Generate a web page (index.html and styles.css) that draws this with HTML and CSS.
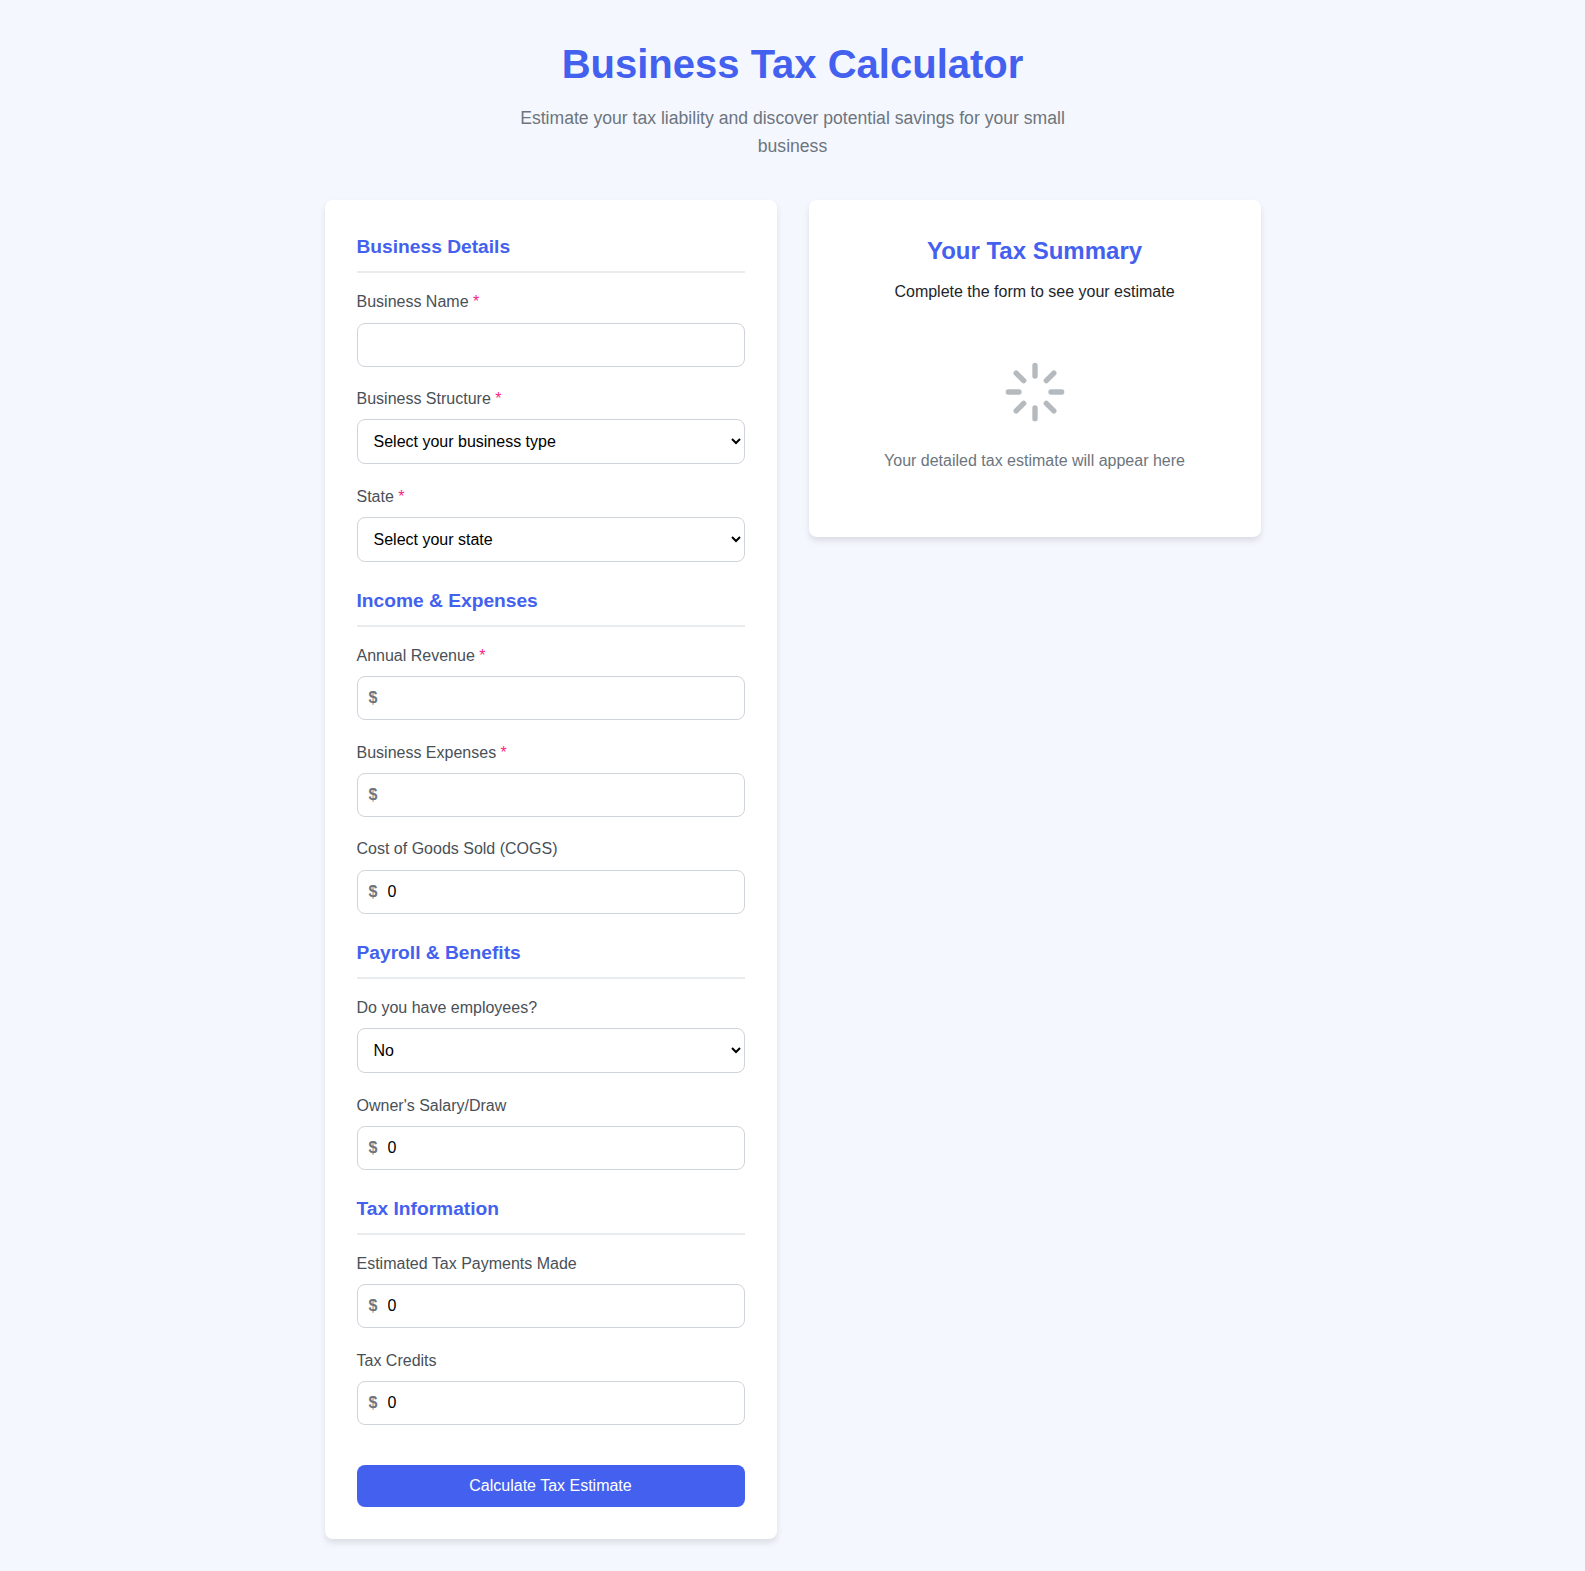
FILE: index.html
```html
<!DOCTYPE html>
<html lang="en">
<head>
<meta charset="utf-8">
<title>Business Tax Calculator</title>
<link rel="stylesheet" href="styles.css">
</head>
<body>
<div class="container">
  <header class="header">
    <h1>Business Tax Calculator</h1>
    <p>Estimate your tax liability and discover potential savings for your small business</p>
  </header>
  <main class="layout">
    <form class="card form-card">
      <h2 class="section-title">Business Details</h2>
      <div class="field">
        <label>Business Name <span class="req">*</span></label>
        <input class="control" type="text">
      </div>
      <div class="field">
        <label>Business Structure <span class="req">*</span></label>
        <select class="control"><option>Select your business type</option></select>
      </div>
      <div class="field">
        <label>State <span class="req">*</span></label>
        <select class="control"><option>Select your state</option></select>
      </div>
      <h2 class="section-title">Income &amp; Expenses</h2>
      <div class="field">
        <label>Annual Revenue <span class="req">*</span></label>
        <div class="money"><span class="sign">$</span><input class="control" type="text"></div>
      </div>
      <div class="field">
        <label>Business Expenses <span class="req">*</span></label>
        <div class="money"><span class="sign">$</span><input class="control" type="text"></div>
      </div>
      <div class="field">
        <label>Cost of Goods Sold (COGS)</label>
        <div class="money"><span class="sign">$</span><input class="control" type="text" value="0"></div>
      </div>
      <h2 class="section-title">Payroll &amp; Benefits</h2>
      <div class="field">
        <label>Do you have employees?</label>
        <select class="control"><option>No</option><option>Yes</option></select>
      </div>
      <div class="field">
        <label>Owner's Salary/Draw</label>
        <div class="money"><span class="sign">$</span><input class="control" type="text" value="0"></div>
      </div>
      <h2 class="section-title">Tax Information</h2>
      <div class="field">
        <label>Estimated Tax Payments Made</label>
        <div class="money"><span class="sign">$</span><input class="control" type="text" value="0"></div>
      </div>
      <div class="field">
        <label>Tax Credits</label>
        <div class="money"><span class="sign">$</span><input class="control" type="text" value="0"></div>
      </div>
      <button class="submit" type="button">Calculate Tax Estimate</button>
    </form>
    <aside class="card summary">
      <h2>Your Tax Summary</h2>
      <p class="lead">Complete the form to see your estimate</p>
      <div class="placeholder">
        <svg class="loader" viewBox="0 0 24 24" fill="none" stroke="currentColor" stroke-width="2" stroke-linecap="round" stroke-linejoin="round">
          <line x1="12" y1="2" x2="12" y2="6"></line>
          <line x1="12" y1="18" x2="12" y2="22"></line>
          <line x1="4.93" y1="4.93" x2="7.76" y2="7.76"></line>
          <line x1="16.24" y1="16.24" x2="19.07" y2="19.07"></line>
          <line x1="2" y1="12" x2="6" y2="12"></line>
          <line x1="18" y1="12" x2="22" y2="12"></line>
          <line x1="4.93" y1="19.07" x2="7.76" y2="16.24"></line>
          <line x1="16.24" y1="7.76" x2="19.07" y2="4.93"></line>
        </svg>
        <p>Your detailed tax estimate will appear here</p>
      </div>
    </aside>
  </main>
</div>
</body>
</html>
```
FILE: styles.css
```css
* { box-sizing: border-box; margin: 0; padding: 0; }
body {
  background: #f5f7ff;
  color: #212529;
  font-family: "Liberation Sans", Arial, sans-serif;
  line-height: 1.6;
}
.container { max-width: 1000px; margin: 0 auto; padding: 32px; }
.header { text-align: center; margin-bottom: 40px; }
.header h1 { color: #4361ee; font-size: 40px; font-weight: 700; margin-bottom: 8px; }
.header p { color: #6c757d; font-size: 17.6px; max-width: 600px; margin: 0 auto; }
.layout { display: grid; grid-template-columns: 1fr 1fr; gap: 32px; align-items: start; }
.card { background: #fff; border-radius: 8px; box-shadow: 0 4px 6px rgba(0, 0, 0, 0.1); padding: 32px; }
.section-title {
  color: #4361ee;
  font-size: 19.2px;
  font-weight: 700;
  padding-bottom: 8px;
  margin: 24px 0 16px;
  border-bottom: 2px solid #e9ecef;
}
.section-title:first-child { margin-top: 0; }
.field { margin-bottom: 19.2px; }
.field label { display: block; color: #495057; font-size: 16px; margin-bottom: 8px; }
.req { color: #f72585; }
.control {
  display: block;
  width: 100%;
  padding: 12px 16px;
  font-family: "Liberation Sans", Arial, sans-serif;
  font-size: 16px;
  color: #000;
  background: #fff;
  border: 1px solid #ced4da;
  border-radius: 8px;
}
select.control { padding-left: 12px; }
.money { position: relative; }
.money .control { padding-left: 30px; }
.sign {
  position: absolute;
  left: 12px;
  top: 50%;
  transform: translateY(-50%);
  color: #6c757d;
  font-weight: 700;
  font-size: 16px;
}
.submit {
  display: block;
  width: 100%;
  margin-top: 40px;
  padding: 12px;
  background: #4361ee;
  color: #fff;
  border: 0;
  border-radius: 8px;
  font-family: "Liberation Sans", Arial, sans-serif;
  font-size: 16px;
}
.summary { text-align: center; }
.summary h2 { color: #4361ee; font-size: 24px; font-weight: 700; margin-bottom: 8px; }
.lead { font-size: 16px; }
.placeholder { padding: 56px 0 31.2px; color: #6c757d; }
.loader { display: block; width: 64px; height: 64px; margin: 0 auto 24px; color: #b5babe; }
```
